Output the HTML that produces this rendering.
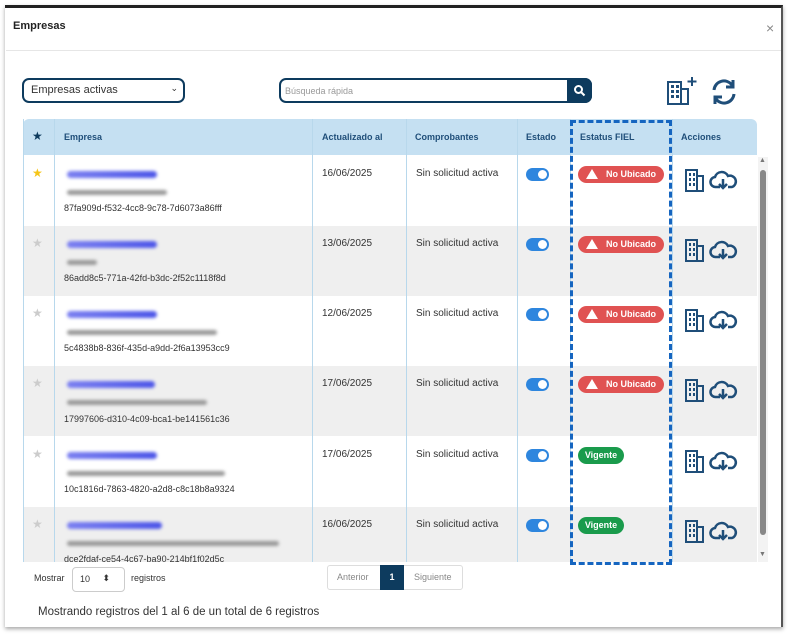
<!DOCTYPE html><html><head><meta charset="utf-8"><style>
*{box-sizing:border-box;margin:0;padding:0}
body{width:791px;height:635px;background:#fff;font-family:"Liberation Sans",sans-serif;position:relative;overflow:hidden}
.abs{position:absolute}
.hdr{left:5px;top:5px;width:778px;height:622px;border-top:3px solid #222;border-right:2px solid #555;box-shadow:0 2px 4px rgba(0,0,0,.35)}
th,td{font-size:10px}
.row{position:absolute;left:23px;width:734px;height:70px}
.cell{position:absolute;font-size:10px;color:#333}
.vl{position:absolute;top:119px;width:1px;height:443px;background:#b8d8ec}
.blur1{position:absolute;height:7px;background:linear-gradient(90deg,#7a7ff0,#4c55e8);border-radius:4px;filter:blur(1.5px)}
.blur2{position:absolute;height:5px;background:#999;border-radius:3px;filter:blur(1.5px)}
.tog{position:absolute;width:23px;height:13px;border-radius:7px;background:#2e86de}
.tog:after{content:"";position:absolute;right:2px;top:2px;width:9px;height:9px;border-radius:50%;background:#fff}
.nu{position:absolute;left:578px;width:86px;height:17px;border-radius:9px;background:#e05252;color:#fff;font-size:9px;font-weight:bold;line-height:17px;padding-left:28px}
.nu:before{content:"";position:absolute;left:8px;top:3px;border-left:6px solid transparent;border-right:6px solid transparent;border-bottom:10px solid #fff}
.vi{position:absolute;left:578px;width:46px;height:17px;border-radius:9px;background:#1a9b4c;color:#fff;font-size:9px;font-weight:bold;line-height:17px;text-align:center}
.star{position:absolute;left:32px;font-size:12px;color:#ccc}
</style></head><body>
<div class="abs hdr"></div>
<div class="abs" style="left:13px;top:20px;font-size:11px;font-weight:bold;color:#222">Empresas</div>
<div class="abs" style="left:766px;top:20px;font-size:14px;color:#888">×</div>
<div class="abs" style="left:6px;top:50px;width:775px;height:1px;background:#e6e6e6"></div>
<div class="abs" style="left:22px;top:78px;width:163px;height:25px;border:2px solid #0d3b5e;border-radius:7px;font-size:11px;color:#333;padding:4px 7px">Empresas activas<span style="position:absolute;right:5px;top:3px;font-size:9px">⌄</span></div>
<div class="abs" style="left:279px;top:78px;width:313px;height:25px;border:2px solid #0d3b5e;border-radius:7px;font-size:9px;color:#999;padding:6px 4px">Búsqueda rápida</div>
<div class="abs" style="left:567px;top:78px;width:25px;height:25px;background:#0d3b5e;border-radius:0 7px 7px 0"><svg width="25" height="25"><circle cx="11.5" cy="11.5" r="3.5" stroke="#fff" stroke-width="2" fill="none"/><path d="M14 14l3.5 3.5" stroke="#fff" stroke-width="2"/></svg></div>
<svg class="abs" style="left:665px;top:76px" width="34" height="30"><rect x="3" y="6" width="13" height="22" fill="none" stroke="#1f4e79" stroke-width="2"/><rect x="16" y="13" width="7" height="15" fill="none" stroke="#1f4e79" stroke-width="2"/><g fill="#1f4e79"><rect x="6" y="9" width="3" height="3"/><rect x="11" y="9" width="3" height="3"/><rect x="6" y="14" width="3" height="3"/><rect x="11" y="14" width="3" height="3"/><rect x="6" y="19" width="3" height="3"/><rect x="11" y="19" width="3" height="3"/></g><path d="M27 1v9M22.5 5.5h9" stroke="#1f4e79" stroke-width="2"/></svg>
<svg class="abs" style="left:709px;top:78px" width="30" height="28"><path d="M5 12a10 10 0 0 1 18-5M25 16a10 10 0 0 1-18 5" fill="none" stroke="#1f4e79" stroke-width="3"/><path d="M24 2v7h-7M6 26v-7h7" fill="none" stroke="#1f4e79" stroke-width="3"/></svg>
<div class="abs" style="left:23px;top:119px;width:734px;height:36px;background:#c5e0f2;border-radius:6px 6px 0 0"></div>
<div class="abs" style="left:32px;top:129px;font-size:12px;color:#0d3b5e">★</div>
<div class="abs" style="left:64px;top:132px;font-size:9px;font-weight:bold;color:#1f4e79">Empresa</div>
<div class="abs" style="left:322px;top:132px;font-size:9px;font-weight:bold;color:#1f4e79">Actualizado al</div>
<div class="abs" style="left:415px;top:132px;font-size:9px;font-weight:bold;color:#1f4e79">Comprobantes</div>
<div class="abs" style="left:526px;top:132px;font-size:9px;font-weight:bold;color:#1f4e79">Estado</div>
<div class="abs" style="left:580px;top:132px;font-size:9px;font-weight:bold;color:#1f4e79">Estatus FIEL</div>
<div class="abs" style="left:681px;top:132px;font-size:9px;font-weight:bold;color:#1f4e79">Acciones</div>
<div class="row" style="top:155px;background:#fff"></div>
<div class="row" style="top:226px;background:#efefef"></div>
<div class="row" style="top:296px;background:#fff"></div>
<div class="row" style="top:366px;background:#efefef"></div>
<div class="row" style="top:437px;background:#fff"></div>
<div class="row" style="top:507px;background:#efefef;height:55px"></div>
<div class="vl" style="left:23px"></div><div class="vl" style="left:54px"></div><div class="vl" style="left:312px"></div><div class="vl" style="left:406px"></div><div class="vl" style="left:517px"></div><div class="vl" style="left:570px"></div><div class="vl" style="left:672px"></div>
<div class="abs" style="left:758px;top:157px;width:10px;height:405px;background:#f3f3f3"></div>
<div class="abs" style="left:760px;top:170px;width:6px;height:365px;background:#888;border-radius:3px"></div>
<div class="abs" style="left:759px;top:157px;font-size:7px;color:#777">▲</div>
<div class="abs" style="left:759px;top:551px;font-size:7px;color:#777">▼</div>

<div class="star" style="top:166px;color:#f5c518">★</div>
<div class="blur1" style="left:67px;top:171px;width:90px"></div><div class="blur2" style="left:67px;top:190px;width:100px"></div>
<div class="cell" style="left:64px;top:203px;font-size:9px">87fa909d-f532-4cc8-9c78-7d6073a86fff</div>
<div class="cell" style="left:322px;top:168px">16/06/2025</div><div class="cell" style="left:416px;top:168px">Sin solicitud activa</div>
<div class="tog" style="left:526px;top:168px"></div><div class="nu" style="top:166px">No Ubicado</div>

<div class="star" style="top:236px">★</div>
<div class="blur1" style="left:67px;top:241px;width:90px"></div><div class="blur2" style="left:67px;top:260px;width:30px"></div>
<div class="cell" style="left:64px;top:273px;font-size:9px">86add8c5-771a-42fd-b3dc-2f52c1118f8d</div>
<div class="cell" style="left:322px;top:238px">13/06/2025</div><div class="cell" style="left:416px;top:238px">Sin solicitud activa</div>
<div class="tog" style="left:526px;top:238px"></div><div class="nu" style="top:236px">No Ubicado</div>

<div class="star" style="top:306px">★</div>
<div class="blur1" style="left:67px;top:311px;width:90px"></div><div class="blur2" style="left:67px;top:330px;width:150px"></div>
<div class="cell" style="left:64px;top:343px;font-size:9px">5c4838b8-836f-435d-a9dd-2f6a13953cc9</div>
<div class="cell" style="left:322px;top:308px">12/06/2025</div><div class="cell" style="left:416px;top:308px">Sin solicitud activa</div>
<div class="tog" style="left:526px;top:308px"></div><div class="nu" style="top:306px">No Ubicado</div>

<div class="star" style="top:376px">★</div>
<div class="blur1" style="left:67px;top:381px;width:88px"></div><div class="blur2" style="left:67px;top:400px;width:140px"></div>
<div class="cell" style="left:64px;top:414px;font-size:9px">17997606-d310-4c09-bca1-be141561c36</div>
<div class="cell" style="left:322px;top:378px">17/06/2025</div><div class="cell" style="left:416px;top:378px">Sin solicitud activa</div>
<div class="tog" style="left:526px;top:378px"></div><div class="nu" style="top:376px">No Ubicado</div>

<div class="star" style="top:447px">★</div>
<div class="blur1" style="left:67px;top:452px;width:90px"></div><div class="blur2" style="left:67px;top:471px;width:158px"></div>
<div class="cell" style="left:64px;top:484px;font-size:9px">10c1816d-7863-4820-a2d8-c8c18b8a9324</div>
<div class="cell" style="left:322px;top:449px">17/06/2025</div><div class="cell" style="left:416px;top:449px">Sin solicitud activa</div>
<div class="tog" style="left:526px;top:449px"></div><div class="vi" style="top:447px">Vigente</div>

<div class="star" style="top:517px">★</div>
<div class="blur1" style="left:67px;top:522px;width:95px"></div><div class="blur2" style="left:67px;top:541px;width:212px"></div>
<div class="cell" style="left:64px;top:554px;font-size:9px;height:8px;overflow:hidden">dce2fdaf-ce54-4c67-ba90-214bf1f02d5c</div>
<div class="cell" style="left:322px;top:519px">16/06/2025</div><div class="cell" style="left:416px;top:519px">Sin solicitud activa</div>
<div class="tog" style="left:526px;top:519px"></div><div class="vi" style="top:517px">Vigente</div>

<svg class="abs" style="left:683px;top:166px" width="60" height="400">
<defs><g id="a"><rect x="3" y="2" width="11" height="21" fill="none" stroke="#1f4e79" stroke-width="2"/><rect x="14" y="8" width="6" height="15" fill="none" stroke="#1f4e79" stroke-width="2"/><g fill="#1f4e79"><rect x="6" y="5" width="2" height="3"/><rect x="10" y="5" width="2" height="3"/><rect x="6" y="10" width="2" height="3"/><rect x="10" y="10" width="2" height="3"/><rect x="6" y="15" width="2" height="3"/><rect x="10" y="15" width="2" height="3"/></g><path d="M37 19h-4a5 5 0 0 1-1-10 7 7 0 0 1 13-1 5 5 0 0 1 4 11h-4" fill="none" stroke="#1f4e79" stroke-width="2.5"/><path d="M40 11v9M36 16l4 4 4-4" fill="none" stroke="#1f4e79" stroke-width="2.5"/></g></defs>
<use href="#a" y="2"/><use href="#a" y="72"/><use href="#a" y="142"/><use href="#a" y="212"/><use href="#a" y="283"/><use href="#a" y="353"/></svg>

<div class="abs" style="left:570px;top:120px;width:102px;height:445px;border:3px dashed #1565c0"></div>

<div class="abs" style="left:34px;top:573px;font-size:9px;color:#333">Mostrar</div>
<div class="abs" style="left:72px;top:567px;width:53px;height:25px;border:1px solid #ccc;border-radius:4px;font-size:9px;padding:6px 7px;color:#333">10<span style="position:absolute;right:14px;top:5px;font-size:9px">⬍</span></div>
<div class="abs" style="left:131px;top:573px;font-size:9px;color:#333">registros</div>
<div class="abs" style="left:327px;top:565px;width:136px;height:25px;border:1px solid #ddd;border-radius:3px"></div>
<div class="abs" style="left:337px;top:572px;font-size:9px;color:#888">Anterior</div>
<div class="abs" style="left:380px;top:565px;width:24px;height:25px;background:#0d3b5e;color:#fff;font-size:9px;font-weight:bold;text-align:center;line-height:25px">1</div>
<div class="abs" style="left:414px;top:572px;font-size:9px;color:#888">Siguiente</div>
<div class="abs" style="left:38px;top:606px;font-size:11.5px;color:#333">Mostrando registros del 1 al 6 de un total de 6 registros</div>
</body></html>
